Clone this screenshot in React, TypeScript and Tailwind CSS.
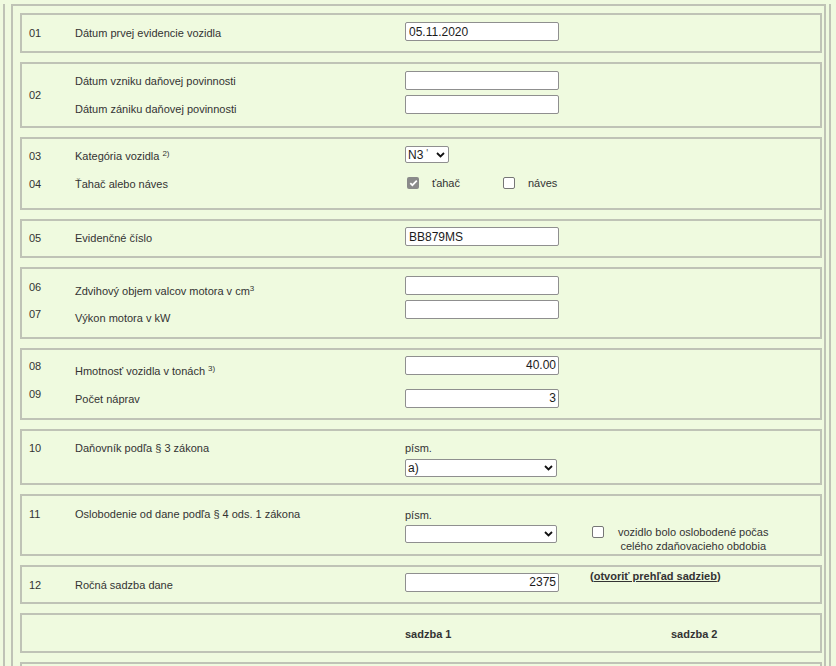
import React from "react";

const GROOVE = "border-solid border-[#bfc3b6]";

function Txt({ children, className = "" }: { children: React.ReactNode; className?: string }) {
  return <div className={`text-[11px] leading-[14px] text-[#333] ${className}`}>{children}</div>;
}

function Sup({ children, gap = true }: { children: React.ReactNode; gap?: boolean }) {
  return (
    <sup className={`relative -top-[4px] text-[8px] leading-none ${gap ? "ml-[3px]" : ""}`}>{children}</sup>
  );
}

function Field({ value = "", right = false, className = "" }: { value?: string; right?: boolean; className?: string }) {
  return (
    <input
      readOnly
      value={value}
      className={`block h-[19px] w-[154px] rounded-[2px] border border-[#8f8f8f] bg-white text-[12px] text-[#1b1b1b] outline-none ${right ? "pr-[2px] text-right" : "pl-[3px]"} ${className}`}
    />
  );
}

function Chevron() {
  return (
    <svg width="9" height="6" viewBox="0 0 9 6" className="shrink-0">
      <path d="M1 1l3.5 3.5L8 1" fill="none" stroke="#111" strokeWidth="1.8" />
    </svg>
  );
}

function Select({ value, className = "" }: { value: React.ReactNode; className?: string }) {
  return (
    <div className={`flex items-center justify-between overflow-hidden rounded-[2px] border border-[#8f8f8f] bg-white pl-[2px] pr-[3px] text-[12px] text-[#1b1b1b] ${className}`}>
      <span className="whitespace-nowrap">{value}</span>
      <Chevron />
    </div>
  );
}

function Check({ checked = false }: { checked?: boolean }) {
  if (checked) {
    return (
      <span className="flex h-[12px] w-[12px] shrink-0 items-center justify-center rounded-[2px] bg-[#8a8a8a]">
        <svg width="9" height="8" viewBox="0 0 9 8">
          <path d="M1.3 4.1l2.1 2.1L7.8 1.6" fill="none" stroke="#fff" strokeWidth="1.7" />
        </svg>
      </span>
    );
  }
  return <span className="block h-[12px] w-[12px] shrink-0 rounded-[2px] border border-[#767676] bg-white" />;
}

function Section({ className, children }: { className: string; children: React.ReactNode }) {
  return (
    <div className={`grid grid-cols-[46px_330px_1fr] border-2 ${GROOVE} pl-[7px] ${className}`}>
      {children}
    </div>
  );
}

export default function App() {
  return (
    <div className="h-[666px] overflow-hidden bg-[#effadf] font-['Liberation_Sans',Arial,sans-serif]">
      <div className={`ml-[3px] h-[700px] w-[828px] border-x-2 ${GROOVE} pl-[6px]`}>
        <div className={`mt-[4px] flex h-[700px] w-[815px] flex-col gap-[9px] border-2 ${GROOVE} pl-[7px] pr-[2px] pt-[7px]`}>

          {/* 01 */}
          <Section className="h-[40px]">
            <Txt className="pt-[11px]">01</Txt>
            <Txt className="pt-[11px]">Dátum prvej evidencie vozidla</Txt>
            <div className="pt-[7px]">
              <Field value="05.11.2020" />
            </div>
          </Section>

          {/* 02 */}
          <Section className="h-[67px]">
            <Txt className="pt-[24px]">02</Txt>
            <div className="pt-[10px]">
              <Txt>Dátum vzniku daňovej povinnosti</Txt>
              <Txt className="mt-[14px]">Dátum zániku daňovej povinnosti</Txt>
            </div>
            <div className="pt-[7px]">
              <Field />
              <Field className="mt-[5px]" />
            </div>
          </Section>

          {/* 03 / 04 */}
          <Section className="h-[73px]">
            <div className="pt-[10px]">
              <Txt>03</Txt>
              <Txt className="mt-[14px]">04</Txt>
            </div>
            <div className="pt-[10px]">
              <Txt>
                Kategória vozidla<Sup>2)</Sup>
              </Txt>
              <Txt className="mt-[14px]">Ťahač alebo náves</Txt>
            </div>
            <div className="pt-[7px]">
              <Select
                className="h-[17px] w-[44px]"
                value={
                  <>
                    N3<span className="relative -top-[2px] ml-[3px] text-[10px] text-[#555]">'</span>
                  </>
                }
              />
              <div className="mt-[13px] flex h-[14px] items-center">
                <span className="ml-[2px]">
                  <Check checked />
                </span>
                <Txt className="ml-[13px] w-[71px]">ťahač</Txt>
                <Check />
                <Txt className="ml-[13px]">náves</Txt>
              </div>
            </div>
          </Section>

          {/* 05 */}
          <Section className="h-[39px]">
            <Txt className="pt-[10px]">05</Txt>
            <Txt className="pt-[10px]">Evidenčné číslo</Txt>
            <div className="pt-[6px]">
              <Field value="BB879MS" />
            </div>
          </Section>

          {/* 06 / 07 */}
          <Section className="h-[72px]">
            <div className="pt-[11px]">
              <Txt>06</Txt>
              <Txt className="mt-[13px]">07</Txt>
            </div>
            <div className="pt-[15px]">
              <Txt>
                Zdvihový objem valcov motora v cm<Sup gap={false}>3</Sup>
              </Txt>
              <Txt className="mt-[13px]">Výkon motora v kW</Txt>
            </div>
            <div className="pt-[7px]">
              <Field />
              <Field className="mt-[5px]" />
            </div>
          </Section>

          {/* 08 / 09 */}
          <Section className="h-[73px]">
            <div className="pt-[9px]">
              <Txt>08</Txt>
              <Txt className="mt-[14px]">09</Txt>
            </div>
            <div className="pt-[14px]">
              <Txt>
                Hmotnosť vozidla v tonách<Sup>3)</Sup>
              </Txt>
              <Txt className="mt-[14px]">Počet náprav</Txt>
            </div>
            <div className="pt-[6px]">
              <Field value="40.00" right />
              <Field value="3" right className="mt-[14px]" />
            </div>
          </Section>

          {/* 10 */}
          <Section className="h-[56px]">
            <Txt className="pt-[10px]">10</Txt>
            <Txt className="pt-[10px]">Daňovník podľa § 3 zákona</Txt>
            <div className="pt-[10px]">
              <Txt>písm.</Txt>
              <Select value="a)" className="mt-[4px] h-[18px] w-[152px]" />
            </div>
          </Section>

          {/* 11 */}
          <Section className="h-[62px]">
            <Txt className="pt-[11px]">11</Txt>
            <Txt className="pt-[11px]">Oslobodenie od dane podľa § 4 ods. 1 zákona</Txt>
            <div className="flex">
              <div className="w-[152px] pt-[12px]">
                <Txt>písm.</Txt>
                <Select value="" className="mt-[3px] h-[18px] w-[152px]" />
              </div>
              <div className="ml-[35px] flex items-start pt-[29px]">
                <span className="mt-[1px]">
                  <Check />
                </span>
                <Txt className="ml-[14px] text-center">
                  vozidlo bolo oslobodené počas
                  <br />
                  celého zdaňovacieho obdobia
                </Txt>
              </div>
            </div>
          </Section>

          {/* 12 */}
          <Section className="h-[40px]">
            <Txt className="pt-[11px]">12</Txt>
            <Txt className="pt-[11px]">Ročná sadzba dane</Txt>
            <div className="flex items-start">
              <div className="pt-[6px]">
                <Field value="2375" right />
              </div>
              <Txt className="ml-[31px] pt-[2px] font-bold">
                (<span className="underline">otvoriť prehľad sadzieb</span>)
              </Txt>
            </div>
          </Section>

          {/* sadzby */}
          <Section className="h-[40px]">
            <div />
            <div />
            <div className="flex pt-[12px]">
              <Txt className="w-[266px] font-bold">sadzba 1</Txt>
              <Txt className="font-bold">sadzba 2</Txt>
            </div>
          </Section>

          <Section className="h-[40px]">
            <div />
          </Section>
        </div>
      </div>
    </div>
  );
}
